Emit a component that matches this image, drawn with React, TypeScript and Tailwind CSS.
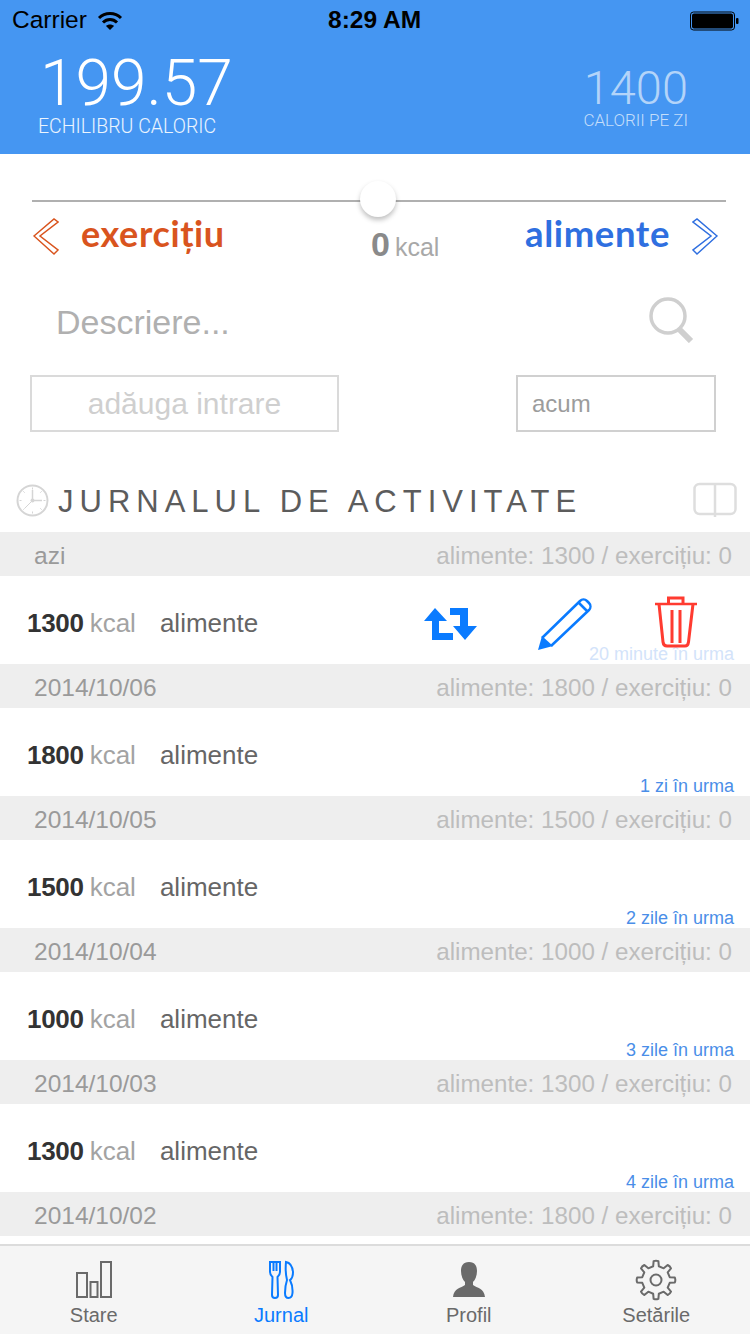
const DAYS = [
  { date: "azi", food: 1300, kcal: "1300", ago: "20 minute în urma", actions: true },
  { date: "2014/10/06", food: 1800, kcal: "1800", ago: "1 zi în urma" },
  { date: "2014/10/05", food: 1500, kcal: "1500", ago: "2 zile în urma" },
  { date: "2014/10/04", food: 1000, kcal: "1000", ago: "3 zile în urma" },
  { date: "2014/10/03", food: 1300, kcal: "1300", ago: "4 zile în urma" },
];

// eight rounded teeth, first one pointing straight up
function gearPath(cx: number, cy: number, outer: number, root: number) {
  const teeth = 8;
  const pt = (r: number, a: number) => `${(cx + r * Math.sin(a)).toFixed(2)} ${(cy - r * Math.cos(a)).toFixed(2)}`;
  let d = "";
  for (let i = 0; i < teeth; i++) {
    const a = (i * 2 * Math.PI) / teeth;
    const step = (2 * Math.PI) / teeth;
    d += `${i === 0 ? "M" : "L"}${pt(root, a - step * 0.26)} L${pt(outer, a - step * 0.16)} Q${pt(outer + 0.8, a)} ${pt(outer, a + step * 0.16)} L${pt(root, a + step * 0.26)} `;
  }
  return d + "Z";
}

function DayHeader({ date, food }: { date: string; food: number }) {
  return (
    <div className="flex h-11 items-center justify-between bg-[#eeeeee] pl-[34px] pr-[18px] pt-1 leading-none">
      <span className="text-[24.5px] text-[#9a9a9a]">{date}</span>
      <span className="text-[24.2px] text-[#bdbdbd]">alimente: {food} / exercițiu: 0</span>
    </div>
  );
}

function RowActions() {
  return (
    <div className="absolute left-[424px] top-5 flex items-start">
      <svg width="53" height="33" viewBox="0 0 53 33" className="mt-3" fill="#0a7bff">
        <polygon points="11,0 23,13 15,13 15,25 29,25 29,32 8,32 8,13 0,13" />
        <polygon points="26,0 44,0 44,18 53,18 41,32 29,18 36,18 36,7 26,7" />
      </svg>
      <svg width="54" height="52" viewBox="0 0 54 52" className="ml-[61px] mt-0.5" fill="none" stroke="#0a7bff" strokeWidth="2.500">
        <path d="M4 40 L42 3 a5 5 0 0 1 7 0 L51 5 a5 5 0 0 1 0 7 L13 48" />
        <path d="M41 5 L49 13" />
        <path d="M0 52 L4 38 L15 48 Z" fill="#0a7bff" strokeWidth="0" />
      </svg>
      <svg width="42" height="52" viewBox="0 0 42 52" className="ml-[63px]" fill="none" stroke="#ff3b30" strokeWidth="3">
        <path d="M13.500 7 V2 H28 V7" />
        <path d="M0 8 H42" strokeWidth="2.500" />
        <path d="M4 8 L8 46 Q8.500 50 12 50 H30 Q33 50 33.500 46 L38 8" />
        <path d="M17 14 V47 M25 14 V47" />
      </svg>
    </div>
  );
}

function DayRow({ kcal, ago, actions }: { kcal: string; ago: string; actions?: boolean }) {
  return (
    <div className="relative flex h-[88px] items-center bg-white pl-[27px] pt-1.5 text-[26px]">
      <span className="font-bold tracking-[-0.3px] text-[#333333]">{kcal}</span>
      <span className="ml-[6px] text-[#a3a3a3]">kcal</span>
      <span className="ml-6 text-[#666666]">alimente</span>
      <span className={`absolute bottom-px right-4 text-[18px] leading-[18px] ${actions ? "text-[#d3e3fa]" : "text-[#4a8ee8]"}`}>
        {ago}
      </span>
      {actions && <RowActions />}
    </div>
  );
}

function TabItem({ label, active, children }: { label: string; active?: boolean; children: React.ReactNode }) {
  return (
    <div className={`flex flex-col items-center ${active ? "text-[#0a7bff]" : "text-[#6a6a6a]"}`}>
      <div className="flex h-[42px] items-center">{children}</div>
      <span className="mt-px text-[20px] leading-[26px]">{label}</span>
    </div>
  );
}

export default function App() {
  return (
    <div className="flex h-[1334px] w-[750px] flex-col overflow-hidden bg-white font-['Liberation_Sans',sans-serif]">
      <header className="h-[154px] bg-[#4596f2]">
        <div className="relative flex h-10 items-center justify-between pl-3 pr-[10px] pt-px text-black">
          <div className="flex items-center gap-2.5 text-[24.5px]">
            Carrier
            <svg width="26" height="20" viewBox="0 0 26 20" fill="none" stroke="#000" strokeWidth="3">
              <path d="M2 7 C8 1 18 1 24 7" />
              <path d="M6 11.500 C10 7.500 16 7.500 20 11.500" />
              <path d="M13 19 L9 15 C11 13 15 13 17 15 Z" fill="#000" strokeWidth="0" />
            </svg>
          </div>
          <span className="absolute left-[328px] text-[24.5px] font-bold">8:29 AM</span>
          <svg width="50" height="20" viewBox="0 0 50 20">
            <rect x="0.500" y="1" width="44" height="18" rx="3" fill="none" stroke="#000" strokeWidth="1" />
            <rect x="2" y="2.500" width="41" height="15" rx="2" fill="#000" />
            <rect x="46" y="7" width="2.500" height="6" rx="1" fill="#000" />
          </svg>
        </div>
        <div className="flex justify-between pl-[38px] pr-[62px] font-['Roboto',sans-serif] font-light">
          <div className="mt-[11px] flex flex-col items-start">
            <span className="ml-[2px] text-[64px] leading-[66px] text-white">199.57</span>
            <span className="text-[19.5px] leading-[20px] text-white/90">ECHILIBRU CALORIC</span>
          </div>
          <div className="mt-[24px] flex flex-col items-end">
            <span className="text-[47px] leading-[47px] text-white/60">1400</span>
            <span className="text-[17px] leading-[18px] text-white/70">CALORII PE ZI</span>
          </div>
        </div>
      </header>

      <section className="h-[378px] shrink-0 bg-white">
        <div className="relative ml-8 mr-6 mt-[46px] h-0.5 bg-[#b0b0b0]">
          <div className="absolute left-[328px] top-[-19px] h-9 w-9 rounded-full bg-white shadow-[0_3px_5px_rgba(0,0,0,0.25)]" />
        </div>

        <div className="relative mt-4 flex h-[42px] items-start justify-between pl-[33px] pr-[32px]">
          <div className="flex items-start">
            <svg width="26" height="38" viewBox="0 0 26 38" fill="none" stroke="#d9541e" strokeWidth="1.500">
              <path d="M1 18 L21 1 L25 4 L7 18 L25 32 L21 36 Z" />
            </svg>
            <span className="-mt-1 ml-[22px] font-['Lato',sans-serif] text-[36px] font-bold leading-[38px] tracking-[0.6px] text-[#d9541e]">exercițiu</span>
          </div>
          <div className="absolute left-[371px] top-2 flex items-baseline">
            <span className="text-[34px] font-bold leading-[36px] text-[#8a8a8a]">0</span>
            <span className="ml-[5px] text-[25px] leading-[36px] text-[#a8a8a8]">kcal</span>
          </div>
          <div className="flex items-start">
            <span className="-mt-1 mr-[22px] font-['Lato',sans-serif] text-[36.5px] font-bold leading-[38px] tracking-[0.6px] text-[#2f6fe0]">alimente</span>
            <svg width="26" height="38" viewBox="0 0 26 38" fill="none" stroke="#2f6fe0" strokeWidth="1.500">
              <path d="M25 18 L5 1 L1 4 L19 18 L1 32 L5 36 Z" />
            </svg>
          </div>
        </div>

        <div className="mt-[35px] flex h-[54px] items-center justify-between pl-14 pr-[56px]">
          <span className="text-[34px] text-[#b0b0b0]">Descriere...</span>
          <svg width="46" height="46" viewBox="0 0 46 46" fill="none" stroke="#cfcfcf" className="mb-1">
            <circle cx="20" cy="19" r="17" strokeWidth="3.500" />
            <path d="M31 32 L43 44" strokeWidth="6" />
          </svg>
        </div>

        <div className="mt-[26px] flex justify-between pl-[30px] pr-[34px]">
          <div className="flex h-[57px] w-[309px] items-center justify-center border-2 border-[#dadada] text-[30px] text-[#cfcfcf]">
            adăuga intrare
          </div>
          <div className="flex h-[57px] w-[200px] items-center border-2 border-[#d0d0d0] pl-[14px] text-[24px] text-[#9c9c9c]">
            acum
          </div>
        </div>

        <div className="mt-[50px] flex h-9 items-center justify-between pl-4 pr-[13px]">
          <div className="flex items-center">
            <svg width="33" height="33" viewBox="0 0 33 33" fill="none" stroke="#d5d5d5">
              <circle cx="16.500" cy="16.500" r="15" strokeWidth="2" />
              <path d="M16.500 6 V16.500 H26" strokeWidth="1.500" />
              <path d="M16.500 16.500 L9 24" strokeWidth="1" />
              <path d="M16.500 3.500 V5.500 M16.500 27.500 V29.500 M3.500 16.500 H5.500 M27.500 16.500 H29.500 M7.300 7.300 L8.700 8.700 M24.300 24.300 L25.700 25.700 M25.700 7.300 L24.300 8.700 M8.700 24.300 L7.300 25.700" strokeWidth="1" />
              <circle cx="16.500" cy="16.500" r="2" fill="#d5d5d5" strokeWidth="0" />
            </svg>
            <span className="ml-[9px] mt-1 text-[31px] leading-9 tracking-[6px] text-[#5c5c5c]">JURNALUL DE ACTIVITATE</span>
          </div>
          <svg width="44" height="36" viewBox="0 0 44 36" fill="none" stroke="#dedede" strokeWidth="2.500">
            <rect x="1.500" y="2" width="41" height="30" rx="5" />
            <path d="M22 2 V35" />
          </svg>
        </div>
      </section>

      <main className="flex-1">
        {DAYS.map((day) => (
          <div key={day.date}>
            <DayHeader date={day.date} food={day.food} />
            <DayRow kcal={day.kcal} ago={day.ago} actions={day.actions} />
          </div>
        ))}
        <DayHeader date="2014/10/02" food={1800} />
      </main>

      <nav className="grid h-[90px] grid-cols-4 border-t-2 border-[#dcdcdc] bg-[#f5f5f5] pt-[13px]">
        <TabItem label="Stare">
          <svg width="36" height="38" viewBox="0 0 36 38" fill="none" stroke="currentColor" strokeWidth="2">
            <rect x="1" y="12" width="10" height="24" />
            <rect x="14.500" y="21" width="7" height="15" />
            <rect x="25" y="1" width="10" height="35" />
          </svg>
        </TabItem>
        <TabItem label="Jurnal" active>
          <svg width="26" height="40" viewBox="0 0 26 40" fill="none" stroke="currentColor" strokeWidth="2">
            <path d="M2 2 H12 V12 Q12 15 9.500 17 L10 35 Q10 38 7 38 Q4 38 4 35 L4.500 17 Q2 15 2 12 Z" />
            <path d="M5.500 2 V11 M8.500 2 V11" />
            <path d="M18 2 Q24 3 25 12 Q25 18 22 20 Q25 26 24.500 33 Q24 38 20.500 38 Q17 38 17 33 Q17 26 19 20 Q17 12 18 2 Z" />
          </svg>
        </TabItem>
        <TabItem label="Profil">
          <svg width="32" height="36" viewBox="0 0 32 36" fill="currentColor">
            <path d="M16 0 C22 0 24 4 24 9 C24 14 22 18 20 20 L20 23 C24 26 31 26 32 35 H0 C1 26 8 26 12 23 L12 20 C10 18 8 14 8 9 C8 4 10 0 16 0 Z" />
          </svg>
        </TabItem>
        <TabItem label="Setările">
          <svg width="42" height="42" viewBox="0 0 42 42" fill="none" stroke="currentColor" strokeWidth="2" strokeLinejoin="round">
            <circle cx="21" cy="21" r="5.500" strokeWidth="2" />
            <path d={gearPath(21, 21, 19, 14)} />
          </svg>
        </TabItem>
      </nav>
    </div>
  );
}
